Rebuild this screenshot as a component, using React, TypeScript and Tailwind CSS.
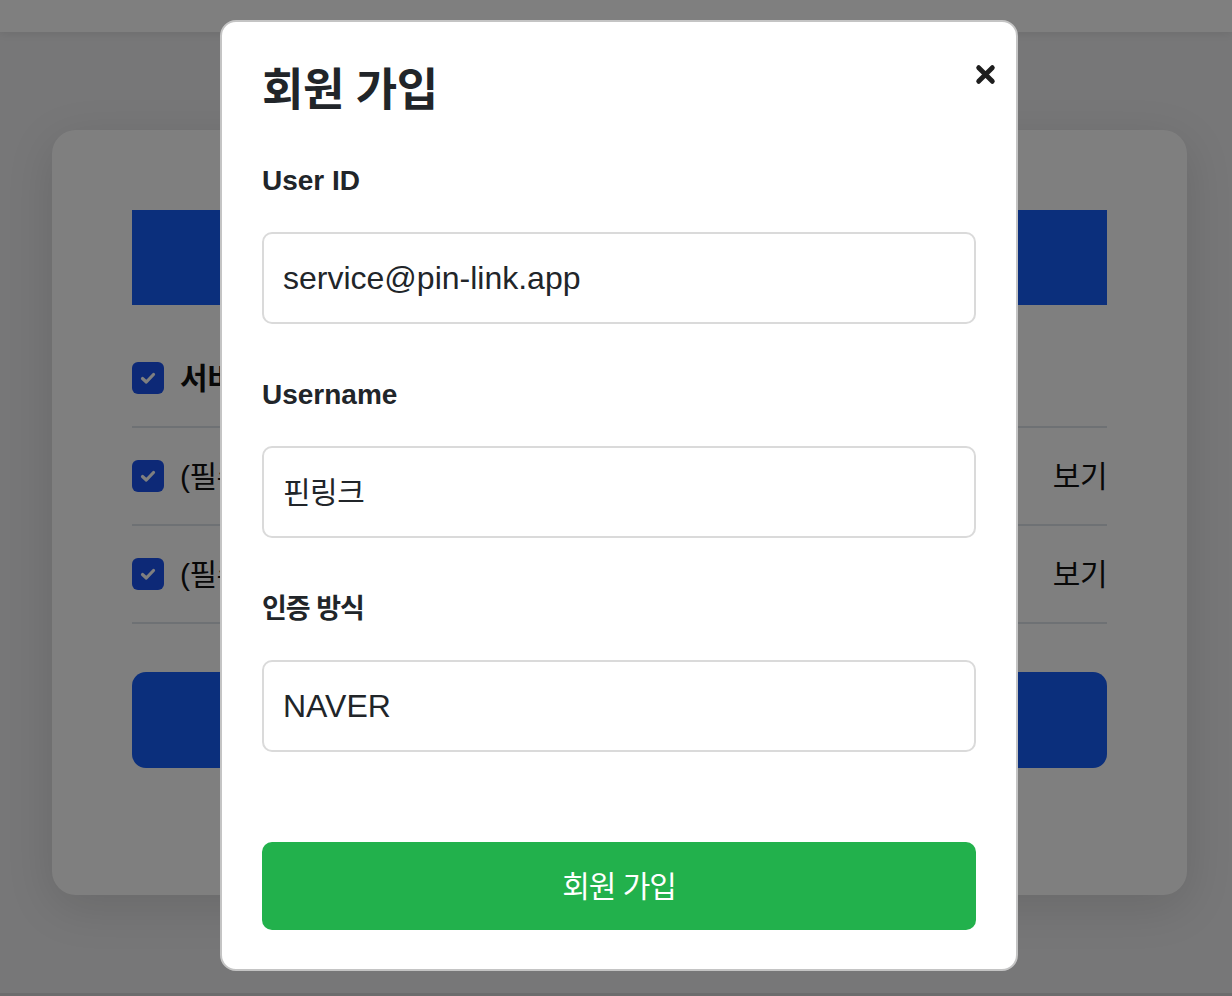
import React from "react";

const font = { fontFamily: '"Liberation Sans", "Noto Sans CJK KR", sans-serif' };

function Check() {
  return (
    <span className="flex h-[32px] w-[32px] shrink-0 items-center justify-center rounded-[6px] bg-[#1a52ef]">
      <svg width="20" height="20" viewBox="0 0 20 20" fill="none">
        <path d="M4.5 10.5 L8.3 14 L15.5 6.5" stroke="white" strokeWidth="3.2" strokeLinecap="round" strokeLinejoin="round" />
      </svg>
    </span>
  );
}

function Row({ text, bold, view }: { text: string; bold?: boolean; view?: boolean }) {
  return (
    <div className="flex h-[98px] items-center gap-[16px] border-b-2 border-[#dde2e9]">
      <Check />
      <span className={`flex-1 text-[30px] tracking-[-0.5px] text-[#111] ${bold ? "font-bold" : ""}`}>{text}</span>
      {view && <span className="text-[30px] tracking-[-0.5px] text-[#111]">보기</span>}
    </div>
  );
}

function Field({ label, value, korean, koreanLabel }: { label: string; value: string; korean?: boolean; koreanLabel?: boolean }) {
  return (
    <div className="flex flex-col">
      <div className={`h-[36px] font-bold leading-[40px] text-[#212529] ${koreanLabel ? "text-[27px] tracking-[-1px]" : "text-[28px]"}`}>{label}</div>
      <div className="mt-[35px] flex h-[92px] items-center rounded-[10px] border-2 border-[#dadada] px-[19px]">
        <span className={`text-[#212529] ${korean ? "text-[30px] tracking-[-0.5px]" : "text-[32px]"}`}>{value}</span>
      </div>
    </div>
  );
}

export default function App() {
  return (
    <div style={font} className="relative h-[996px] w-[1232px] overflow-hidden bg-[#eeeef0]">
      <div className="h-[32px] bg-white shadow-[0_2px_8px_rgba(0,0,0,0.08)]" />
      <div className="ml-[52px] mt-[98px] h-[765px] w-[1135px] rounded-[24px] bg-white px-[80px] pt-[80px] shadow-[0_12px_48px_rgba(0,0,0,0.12)]">
        <div className="flex h-[95px] items-center justify-center bg-[#165ef8] text-[32px] font-bold text-white">약관 동의</div>
        <div className="mt-[25px]">
          <Row text="서비스 약관 전체 동의" bold />
          <Row text="(필수) 서비스 이용약관 동의" view />
          <Row text="(필수) 개인정보 처리방침 동의" view />
        </div>
        <div className="mt-[48px] flex h-[96px] items-center justify-center rounded-[14px] bg-[#165ef8] text-[30px] font-bold text-white">다음</div>
      </div>
      <div className="absolute bottom-0 left-0 right-0 h-[3px] bg-[#d8d8da]" />

      <div className="absolute inset-0 bg-black/50" />

      <div className="absolute left-[220px] top-[20px] h-[951px] w-[798px] rounded-[16px] border-2 border-[#c4c4c4] bg-white px-[40px] pt-[40px]">
        <button className="absolute right-[20px] top-[41px] flex h-[22px] w-[22px] items-center justify-center">
          <svg width="21" height="21" viewBox="0 0 20 20">
            <path d="M3.5 3.5 L16.5 16.5 M16.5 3.5 L3.5 16.5" stroke="#1e1e1e" strokeWidth="4.6" strokeLinecap="round" />
          </svg>
        </button>
        <h1 className="h-[58px] text-[45px] font-bold leading-[58px] tracking-[-0.5px] text-[#212529]">회원 가입</h1>
        <div className="mt-[41px] flex flex-col gap-[51px]">
          <Field label="User ID" value="service@pin-link.app" />
          <Field label="Username" value="핀링크" korean />
          <Field label="인증 방식" value="NAVER" koreanLabel />
        </div>
        <button className="mt-[90px] flex h-[88px] w-full items-center justify-center rounded-[10px] bg-[#22b14c] text-[30px] tracking-[-1px] text-white">
          회원 가입
        </button>
      </div>
    </div>
  );
}
